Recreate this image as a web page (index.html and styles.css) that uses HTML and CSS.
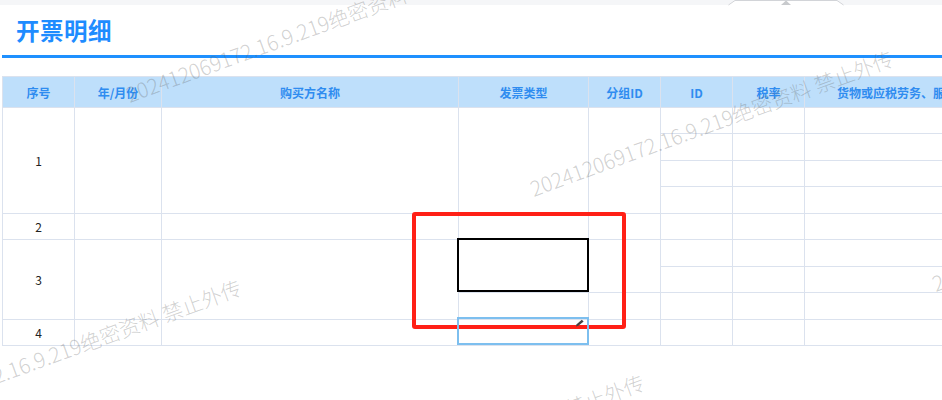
FILE: index.html
```html
<!DOCTYPE html>
<html>
<head>
<meta charset="utf-8">
<link rel="stylesheet" href="styles.css">
</head>
<body>

<div class="page">
  <div class="topbar">
    <svg class="notch" width="116" height="6" viewBox="0 0 116 6">
      <path d="M0.5 5 L7 0.5 L109 0.5 L115.5 5" fill="#fff" stroke="#d2d4d8" stroke-width="1"/>
      <path d="M53 5 L58 0.5 L63 5 Z" fill="#c8cacd"/>
    </svg>
  </div>

  <div class="title-bar">
    <h1 class="title">开票明细</h1>
  </div>

  <div class="grid-wrap">
    <table class="detail">
      <colgroup>
        <col class="c-no">
        <col class="c-month">
        <col class="c-buyer">
        <col class="c-type">
        <col class="c-group">
        <col class="c-id">
        <col class="c-rate">
        <col class="c-goods">
      </colgroup>
      <thead>
        <tr>
          <th>序号</th>
          <th>年/月份</th>
          <th>购买方名称</th>
          <th>发票类型</th>
          <th>分组ID</th>
          <th>ID</th>
          <th>税率</th>
          <th class="goods">货物或应税劳务、服务名称</th>
        </tr>
      </thead>
      <tbody>
        <tr>
          <td rowspan="4">1</td>
          <td rowspan="4"></td>
          <td rowspan="4"></td>
          <td rowspan="4"></td>
          <td rowspan="4"></td>
          <td></td><td></td><td></td>
        </tr>
        <tr><td></td><td></td><td></td></tr>
        <tr><td></td><td></td><td></td></tr>
        <tr><td></td><td></td><td></td></tr>
        <tr>
          <td>2</td>
          <td></td><td></td><td></td><td></td>
          <td></td><td></td><td></td>
        </tr>
        <tr>
          <td rowspan="3">3</td>
          <td rowspan="3"></td>
          <td rowspan="3"></td>
          <td rowspan="2"></td>
          <td rowspan="2"></td>
          <td></td><td></td><td></td>
        </tr>
        <tr><td></td><td></td><td></td></tr>
        <tr><td></td><td></td><td></td><td></td><td></td></tr>
        <tr>
          <td>4</td>
          <td></td><td></td><td></td><td></td>
          <td></td><td></td><td></td>
        </tr>
      </tbody>
    </table>

    <!-- editing cell + annotation boxes on top of the grid -->
    <div class="mark mark-red"></div>
    <div class="mark mark-black"></div>
    <div class="mark mark-edit">
      <svg class="pencil" width="10" height="8" viewBox="0 0 10 8">
        <path d="M1 7.5 L1.6 5.2 L6.8 0.8 L8.6 2.4 L3.4 6.8 Z" fill="#444"/>
      </svg>
    </div>
  </div>

  <!-- watermark -->
  <span class="wm wm1">202412069172.16.9.219绝密资料 禁止外传</span>
  <span class="wm wm2">202412069172.16.9.219绝密资料 禁止外传</span>
  <span class="wm wm3">202412069172.16.9.219绝密资料 禁止外传</span>
  <span class="wm wm4">202412069172.16.9.219绝密资料 禁止外传</span>
  <span class="wm wm5">202412069172.16.9.219绝密资料 禁止外传</span>
</div>

</body>
</html>
```

FILE: styles.css
```css
body {
    margin: 0;
    font-family: "Noto Sans CJK SC", "Noto Sans", sans-serif;
    background: #fff;
}

.page {
    position: relative;
    width: 942px;
    height: 400px;
    overflow: hidden;
}

/* grey strip on top with the collapse handle */
.topbar {
    position: relative;
    height: 5px;
    background: #f5f6f8;
}

.notch {
    position: absolute;
    left: 728px;
    top: 0;
}

/* page title */
.title-bar {
    margin: 0 0 0 2px;
    height: 50px;
    border-bottom: 3px solid #1e90ff;
    display: flex;
    align-items: center;
}

.title {
    margin: 0;
    padding: 0 0 0 14px;
    font-size: 23.5px;
    font-weight: bold;
    color: #1e8cff;
    letter-spacing: 0.5px;
}

/* table */
.grid-wrap {
    position: relative;
    margin: 18px 0 0 2px;
}

table.detail {
    border-collapse: collapse;
    table-layout: fixed;
    width: 1024px;
}

col.c-no { width: 72px; }
col.c-month { width: 87px; }
col.c-buyer { width: 297px; }
col.c-type { width: 130px; }
col.c-group { width: 72px; }
col.c-id { width: 72px; }
col.c-rate { width: 72px; }
col.c-goods { width: 222px; }

table.detail th,
table.detail td {
    border: 1px solid #dbe2ee;
    padding: 0;
    text-align: center;
}

table.detail th {
    height: 30px;
    background: #bedffb;
    color: #2f8cf0;
    font-size: 12px;
    font-weight: bold;
}

table.detail th.goods {
    text-align: left;
    padding-left: 32px;
    white-space: nowrap;
    overflow: hidden;
}

table.detail tbody tr {
    height: 26.44px;
}

table.detail td {
    font-size: 12px;
    color: #222;
    background: #fff;
}

/* overlays */
.mark {
    position: absolute;
    box-sizing: border-box;
}

.mark-red {
    left: 410px;
    top: 136px;
    width: 214px;
    height: 117px;
    border: 4px solid #ff2016;
    border-radius: 3px;
}

.mark-black {
    left: 455px;
    top: 162px;
    width: 132px;
    height: 54px;
    border: 2px solid #000;
}

.mark-edit {
    left: 455px;
    top: 241px;
    width: 132px;
    height: 28px;
    border: 2px solid #7dbfef;
}

.pencil {
    position: absolute;
    right: 2px;
    top: 0;
}

/* watermark */
.wm {
    position: absolute;
    white-space: nowrap;
    font-size: 20.7px;
    font-weight: 300;
    line-height: 20px;
    color: rgba(100, 100, 100, 0.3);
    transform-origin: 0 17px;
    transform: rotate(-20deg);
    pointer-events: none;
}

.wm1 { left: 129px; top: 84px; }
.wm2 { left: 533px; top: 178px; }
.wm3 { left: 935px; top: 273px; }
.wm4 { left: -119px; top: 407px; }
.wm5 { left: 284px; top: 502px; }
```
